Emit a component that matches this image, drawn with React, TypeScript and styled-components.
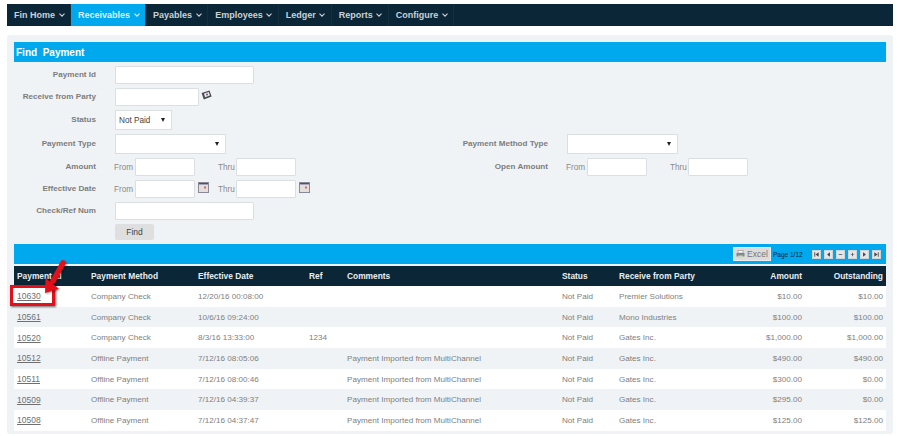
import { createGlobalStyle } from "styled-components";
import styled from "styled-components";

const navItems = ["Fin Home", "Receivables", "Payables", "Employees", "Ledger", "Reports", "Configure"]

const columns = [
  { title: "Payment Id", width: 74 },
  { title: "Payment Method", width: 107 },
  { title: "Effective Date", width: 111 },
  { title: "Ref", width: 38 },
  { title: "Comments", width: 215 },
  { title: "Status", width: 57 },
  { title: "Receive from Party", width: 117 },
  { title: "Amount", width: 72, right: true },
  { title: "Outstanding", width: 81, right: true },
]

const rows = [
  ["10630", "Company Check", "12/20/16 00:08:00", "", "", "Not Paid", "Premier Solutions", "$10.00", "$10.00"],
  ["10561", "Company Check", "10/6/16 09:24:00", "", "", "Not Paid", "Mono Industries", "$100.00", "$100.00"],
  ["10520", "Company Check", "8/3/16 13:33:00", "1234", "", "Not Paid", "Gates Inc.", "$1,000.00", "$1,000.00"],
  ["10512", "Offline Payment", "7/12/16 08:05:06", "", "Payment Imported from MultiChannel", "Not Paid", "Gates Inc.", "$490.00", "$490.00"],
  ["10511", "Offline Payment", "7/12/16 08:00:46", "", "Payment Imported from MultiChannel", "Not Paid", "Gates Inc.", "$300.00", "$0.00"],
  ["10509", "Offline Payment", "7/12/16 04:39:37", "", "Payment Imported from MultiChannel", "Not Paid", "Gates Inc.", "$295.00", "$0.00"],
  ["10508", "Offline Payment", "7/12/16 04:37:47", "", "Payment Imported from MultiChannel", "Not Paid", "Gates Inc.", "$125.00", "$125.00"],
]

function Chevron() {
  return (
    <svg width="6" height="4" viewBox="0 0 6 4">
      <path d="M0.5 0.7 L3 3.2 L5.5 0.7" fill="none" stroke="currentColor" strokeWidth="1.1" />
    </svg>
  )
}

function CalendarIcon() {
  return (
    <svg width="11" height="11" viewBox="0 0 11 11">
      <rect x="0.5" y="0.5" width="10" height="10" fill="#e4dfdb" stroke="#8a8894" />
      <rect x="1" y="1" width="9" height="1.4" fill="#4a4d8c" />
      <rect x="6" y="4.5" width="2" height="2" fill="#d0687a" />
    </svg>
  )
}

function LookupIcon() {
  return (
    <svg width="11" height="10" viewBox="0 0 11 10">
      <path d="M0.6 3 L8.5 0.4 L10.6 6.6 L2.8 9.4 Z" fill="#4a4a4a" />
      <path d="M3 3.6 L7.8 2 L8.9 5.6 L4 7.2 Z" fill="#e8e8ee" />
      <circle cx="6" cy="4.6" r="1" fill="#6a5a8c" />
    </svg>
  )
}

function PagerGlyph({ d }: { d: string }) {
  return (
    <PagerButton>
      <svg width="5" height="5" viewBox="0 0 7 7"><path d={d} fill="#444" /></svg>
    </PagerButton>
  )
}

function Field({ label, children }: { label: string; children: React.ReactNode }) {
  return (
    <FieldBox>
      <Label>{label}</Label>
      {children}
    </FieldBox>
  )
}

function Range({ icons }: { icons?: boolean }) {
  return (
    <RangeBox>
      <RangeWord $w={21}>From</RangeWord>
      <Input $w={60} $h={18} />
      <IconSlot>{icons ? <CalendarIcon /> : null}</IconSlot>
      <RangeWord $w={18}>Thru</RangeWord>
      <Input $w={60} $h={18} />
      {icons ? <IconSlot><CalendarIcon /></IconSlot> : null}
    </RangeBox>
  )
}

export default function App() {
  return (
    <Page>
      <Global />
      <Nav>
        {navItems.map((item) => (
          <NavItem key={item} $active={item === "Receivables"}>{item} <Chevron /></NavItem>
        ))}
      </Nav>

      <Panel>
        <TitleBar>Find&nbsp; Payment</TitleBar>
        <Form>
          <Row $h={18}>
            <Field label="Payment Id"><Input $w={139} $h={18} /></Field>
          </Row>
          <Row $h={18}>
            <Field label="Receive from Party">
              <Input $w={84} $h={18} />
              <LookupSlot><LookupIcon /></LookupSlot>
            </Field>
          </Row>
          <Row $h={20}>
            <Field label="Status"><Select $w={57}>Not Paid</Select></Field>
          </Row>
          <Row $h={20}>
            <Half>
              <Field label="Payment Type"><Select $w={111} /></Field>
            </Half>
            <Field label="Payment Method Type"><Select $w={111} /></Field>
          </Row>
          <Row $h={18}>
            <Half>
              <Field label="Amount"><Range /></Field>
            </Half>
            <Field label="Open Amount"><Range /></Field>
          </Row>
          <Row $h={18}>
            <Field label="Effective Date"><Range icons /></Field>
          </Row>
          <Row $h={18}>
            <Field label="Check/Ref Num"><Input $w={139} $h={18} /></Field>
          </Row>
          <Row $h={16}>
            <Field label=""><FindButton>Find</FindButton></Field>
          </Row>
        </Form>

        <ResultBar>
          <ExcelButton>
            <svg width="9" height="8" viewBox="0 0 9 8">
              <rect x="2" y="0.5" width="5" height="2.5" fill="#fff" stroke="#888" strokeWidth="0.6" />
              <rect x="0.5" y="3" width="8" height="3.5" fill="#7d8a86" />
              <rect x="2" y="5.5" width="5" height="2" fill="#c9d6c3" />
            </svg>
            Excel
          </ExcelButton>
          <PageText>Page 1/12</PageText>
          <Pager>
            <PagerGlyph d="M0.5 0.5 H1.7 V6.5 H0.5 Z M6.5 0.5 V6.5 L2.2 3.5 Z" />
            <PagerGlyph d="M5.5 0.5 V6.5 L1.5 3.5 Z" />
            <PagerGlyph d="M1 3 H6 V4 H1 Z" />
            <PagerGlyph d="M1 3 H3 V1 H4 V3 H6 V4 H4 V6 H3 V4 H1 Z" />
            <PagerGlyph d="M1.5 0.5 V6.5 L5.5 3.5 Z" />
            <PagerGlyph d="M0.5 0.5 V6.5 L4.8 3.5 Z M5.3 0.5 H6.5 V6.5 H5.3 Z" />
          </Pager>
        </ResultBar>

        <TableWrap>
          <Table>
            <colgroup>
              {columns.map((c) => <col key={c.title} style={{ width: c.width }} />)}
            </colgroup>
            <thead>
              <tr>
                {columns.map((c) => <Th key={c.title} $right={c.right}>{c.title}</Th>)}
              </tr>
            </thead>
            <tbody>
              {rows.map((r) => (
                <Tr key={r[0]}>
                  {r.map((v, i) => (
                    <Td key={i} $right={columns[i].right}>
                      {i === 0 ? <IdLink>{v}</IdLink> : v}
                    </Td>
                  ))}
                </Tr>
              ))}
            </tbody>
          </Table>
          <Highlight />
          <Arrow width="30" height="38" viewBox="0 0 30 38">
            <path d="M23 3 L13 21" stroke="#e3101b" strokeWidth="5.5" strokeLinecap="round" fill="none" />
            <path d="M5 33 L5.5 18 L19 29 Z" fill="#e3101b" />
          </Arrow>
        </TableWrap>
      </Panel>
    </Page>
  )
}

const Global = createGlobalStyle`
  html, body {
    margin: 0;
    padding: 0;
    background: #fff;
    overflow: hidden;
  }
  body {
    font-family: "Liberation Sans", Arial, sans-serif;
  }
`

const Page = styled.div`
  width: 900px;
  height: 436px;
  padding: 4px 7px 0;
  box-sizing: border-box;
`

const Nav = styled.div`
  display: flex;
  height: 22px;
  background: #0b2637;
`

const NavItem = styled.div<{ $active?: boolean }>`
  display: flex;
  align-items: center;
  gap: 1px;
  padding: 0 5.5px 0 7px;
  font-size: 9px;
  font-weight: bold;
  white-space: pre;
  color: ${(p) => (p.$active ? "#d9f1fc" : "#c9d2d8")};
  background: ${(p) => (p.$active ? "#00a9ee" : "transparent")};
  border-right: 1px solid #12303f;
`

const Panel = styled.div`
  margin-top: 9px;
  height: 399px;
  padding: 7px;
  box-sizing: border-box;
  background: #eff3f6;
  border-radius: 3px;
`

const TitleBar = styled.div`
  height: 20px;
  padding-left: 2px;
  display: flex;
  align-items: center;
  background: #00a9ee;
  color: #fff;
  font-size: 10px;
  font-weight: bold;
`

const Form = styled.div`
  display: flex;
  flex-direction: column;
  gap: 4px;
  padding-top: 4px;
`

const Row = styled.div<{ $h: number }>`
  display: flex;
  height: ${(p) => p.$h}px;
`

const Half = styled.div`
  width: 452px;
`

const FieldBox = styled.div`
  display: flex;
  align-items: center;
  height: 100%;
`

const Label = styled.div`
  width: 82px;
  margin: 0 19px 2px 0;
  font-size: 8.1px;
  font-weight: bold;
  color: #7d7d7d;
  white-space: nowrap;
  display: flex;
  justify-content: flex-end;
`

const Input = styled.div<{ $w: number; $h: number }>`
  width: ${(p) => p.$w}px;
  height: ${(p) => p.$h}px;
  box-sizing: border-box;
  background: #fff;
  border: 1px solid #dcdfe1;
  border-radius: 1px;
`

const Select = styled.div<{ $w: number }>`
  position: relative;
  width: ${(p) => p.$w}px;
  height: 20px;
  box-sizing: border-box;
  padding-left: 3px;
  display: flex;
  align-items: center;
  background: #fff;
  border: 1px solid #dcdfe1;
  font-size: 8.2px;
  color: #444;

  &::after {
    content: "";
    position: absolute;
    right: 6px;
    top: 7px;
    border-left: 2.5px solid transparent;
    border-right: 2.5px solid transparent;
    border-top: 4px solid #222;
  }
`

const LookupSlot = styled.div`
  margin: -5px 0 0 2px;
  display: flex;
`

const RangeBox = styled.div`
  display: flex;
  align-items: center;
  margin-left: -1px;
`

const RangeWord = styled.div<{ $w: number }>`
  width: ${(p) => p.$w}px;
  font-size: 8.2px;
  color: #8a8a8a;
`

const IconSlot = styled.div`
  width: 23px;
  padding-left: 3px;
  box-sizing: border-box;
  display: flex;
  margin-top: -4px;
`

const FindButton = styled.div`
  width: 39px;
  height: 16px;
  display: flex;
  align-items: center;
  justify-content: center;
  background: #dfdfdf;
  border-radius: 2px;
  font-size: 8.5px;
  color: #444;
`

const ResultBar = styled.div`
  height: 20px;
  margin-top: 4px;
  padding-right: 5px;
  display: flex;
  align-items: center;
  justify-content: flex-end;
  background: #00a9ee;
`

const ExcelButton = styled.div`
  width: 38px;
  height: 14px;
  margin-right: 2px;
  box-sizing: border-box;
  display: flex;
  align-items: center;
  justify-content: center;
  gap: 2px;
  background: #dcdcdc;
  border: 1px solid #eee;
  font-size: 8.5px;
  color: #777;
`

const PageText = styled.div`
  width: 39px;
  font-size: 6.5px;
  color: #123;
  white-space: nowrap;
`

const Pager = styled.div`
  display: flex;
  gap: 3px;
`

const PagerButton = styled.div`
  width: 9px;
  height: 9px;
  box-sizing: border-box;
  display: flex;
  align-items: center;
  justify-content: center;
  background: #e4e7e9;
  border: 1px solid #d0d4d6;
`

const TableWrap = styled.div`
  position: relative;
  margin-top: 2px;
`

const Table = styled.table`
  width: 872px;
  table-layout: fixed;
  border-collapse: collapse;
`

const Th = styled.th<{ $right?: boolean }>`
  height: 20px;
  padding: 0 3px;
  background: #0b2637;
  color: #e8edf0;
  font-size: 8.4px;
  font-weight: bold;
  white-space: nowrap;
  text-align: ${(p) => (p.$right ? "right" : "left")};
`

const Tr = styled.tr`
  height: 20.7px;
  background: #fff;

  &:nth-child(even) {
    background: #eff3f6;
  }
`

const Td = styled.td<{ $right?: boolean }>`
  padding: 0 3px;
  font-size: 8.1px;
  color: #808080;
  white-space: nowrap;
  text-align: ${(p) => (p.$right ? "right" : "left")};
`

const IdLink = styled.a`
  color: #6f6f6f;
  font-size: 8.5px;
  text-decoration: underline;
`

const Highlight = styled.div`
  position: absolute;
  left: -4px;
  top: 19px;
  width: 45px;
  height: 21px;
  box-sizing: border-box;
  border: 3px solid #e3101b;
  box-shadow: 1px 1px 2px rgba(0, 0, 0, 0.6);
`

const Arrow = styled.svg`
  position: absolute;
  left: 26px;
  top: -6px;
  filter: drop-shadow(1px 1px 1px rgba(0, 0, 0, 0.4));
`
